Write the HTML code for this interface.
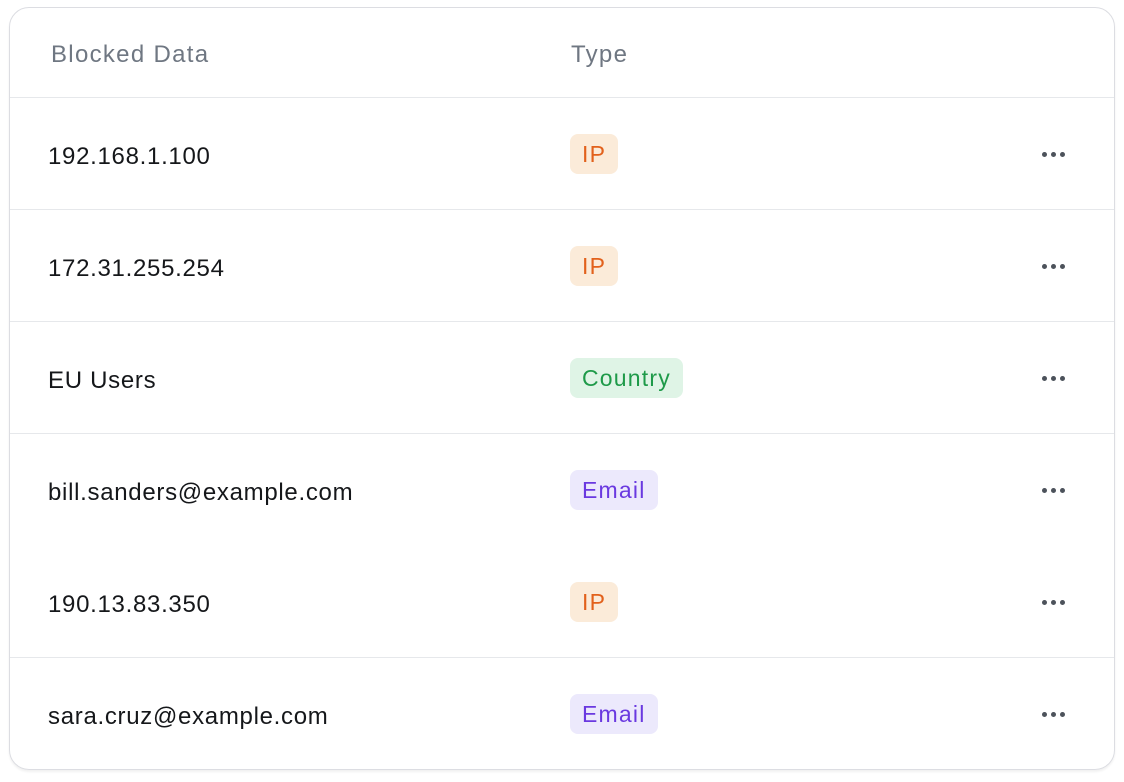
<!DOCTYPE html><html><head><style>
body{margin:0;background:#fff;font-family:"Liberation Sans",sans-serif;}
.card{position:absolute;left:9px;top:7px;width:1104px;height:761px;border:1.5px solid #dcdde2;border-radius:20px;overflow:hidden;box-shadow:0 2px 2px rgba(0,0,0,0.06);}
.hd{height:89px;border-bottom:1.5px solid #e6e8eb;position:relative;color:#6f7782;font-size:24px;letter-spacing:1.3px;}
.hd span{position:absolute;top:33px;}
.row{height:111px;border-bottom:1.5px solid #e6e8eb;position:relative;font-size:24px;letter-spacing:0.7px;color:#15171a;}
.row.nb{border-bottom:1.5px solid transparent;}
.row .d{position:absolute;left:38px;top:45px;}
.b{position:absolute;left:560px;top:36px;height:40px;line-height:41px;padding:0 12px;border-radius:8px;font-size:23px;letter-spacing:1.2px;}
.ip{background:#fbebd9;color:#e2611c;}
.co{background:#dff4e6;color:#1e9a49;}
.em{background:#ece9fc;color:#6a39e0;}
.dots{position:absolute;left:1032px;top:54px;display:flex;gap:4px;}
.dots i{display:block;width:5px;height:5px;border-radius:50%;background:#4c525b;}
</style></head><body><div class="card">
<div class="hd"><span style="left:41px">Blocked Data</span><span style="left:561px">Type</span></div>
<div class="row"><span class="d">192.168.1.100</span><span class="b ip">IP</span><span class="dots"><i></i><i></i><i></i></span></div>
<div class="row"><span class="d">172.31.255.254</span><span class="b ip">IP</span><span class="dots"><i></i><i></i><i></i></span></div>
<div class="row"><span class="d">EU Users</span><span class="b co">Country</span><span class="dots"><i></i><i></i><i></i></span></div>
<div class="row nb"><span class="d">bill.sanders@example.com</span><span class="b em">Email</span><span class="dots"><i></i><i></i><i></i></span></div>
<div class="row"><span class="d">190.13.83.350</span><span class="b ip">IP</span><span class="dots"><i></i><i></i><i></i></span></div>
<div class="row nb"><span class="d">sara.cruz@example.com</span><span class="b em">Email</span><span class="dots"><i></i><i></i><i></i></span></div>
</div></body></html>
